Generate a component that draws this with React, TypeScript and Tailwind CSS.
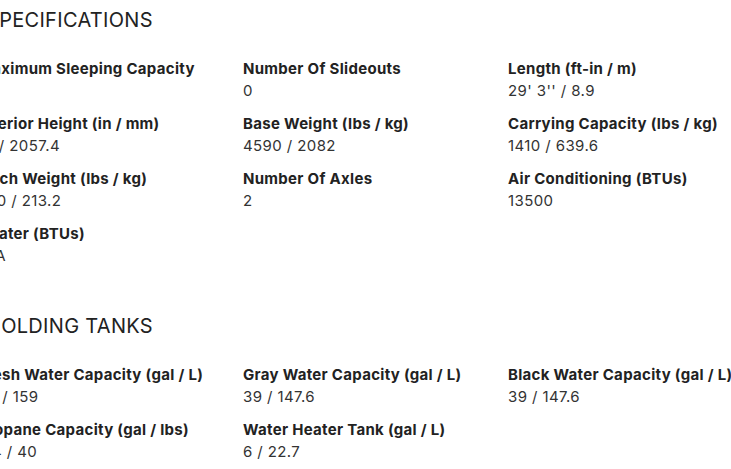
const specifications = [
  { label: 'Maximum Sleeping Capacity', value: '4' },
  { label: 'Number Of Slideouts', value: '0' },
  { label: 'Length (ft-in / m)', value: `29' 3'' / 8.9` },
  { label: 'Interior Height (in / mm)', value: '81 / 2057.4' },
  { label: 'Base Weight (lbs / kg)', value: '4590 / 2082' },
  { label: 'Carrying Capacity (lbs / kg)', value: '1410 / 639.6' },
  { label: 'Hitch Weight (lbs / kg)', value: '470 / 213.2' },
  { label: 'Number Of Axles', value: '2' },
  { label: 'Air Conditioning (BTUs)', value: '13500' },
  { label: 'Heater (BTUs)', value: 'N/A' },
];

const holdingTanks = [
  { label: 'Fresh Water Capacity (gal / L)', value: '42 / 159' },
  { label: 'Gray Water Capacity (gal / L)', value: '39 / 147.6' },
  { label: 'Black Water Capacity (gal / L)', value: '39 / 147.6' },
  { label: 'Propane Capacity (gal / lbs)', value: '9.4 / 40' },
  { label: 'Water Heater Tank (gal / L)', value: '6 / 22.7' },
];

function Section({ title, items }: { title: string; items: { label: string; value: string }[] }) {
  return (
    <section>
      <h2 className="ml-[8px] text-[20px] leading-[28px] font-normal tracking-[0.3px] text-[#222]">{title}</h2>
      <div className="mt-[24px] grid grid-cols-[265px_265px_265px] gap-y-[11px]">
        {items.map(item => (
          <div key={item.label} className="whitespace-nowrap">
            <div className="text-[15px] leading-[22px] font-bold tracking-[0.3px] text-[#222]">{item.label}</div>
            <div className="text-[15px] leading-[22px] tracking-[0.4px] text-[#333]">{item.value}</div>
          </div>
        ))}
      </div>
    </section>
  );
}

export default function App() {
  return (
    <div className="w-[731px] h-[469px] overflow-hidden bg-white font-['Inter',sans-serif]">
      <div className="ml-[-22px] pt-[6px] space-y-[45px]">
        <Section title="SPECIFICATIONS" items={specifications} />
        <Section title="HOLDING TANKS" items={holdingTanks} />
      </div>
    </div>
  );
}
